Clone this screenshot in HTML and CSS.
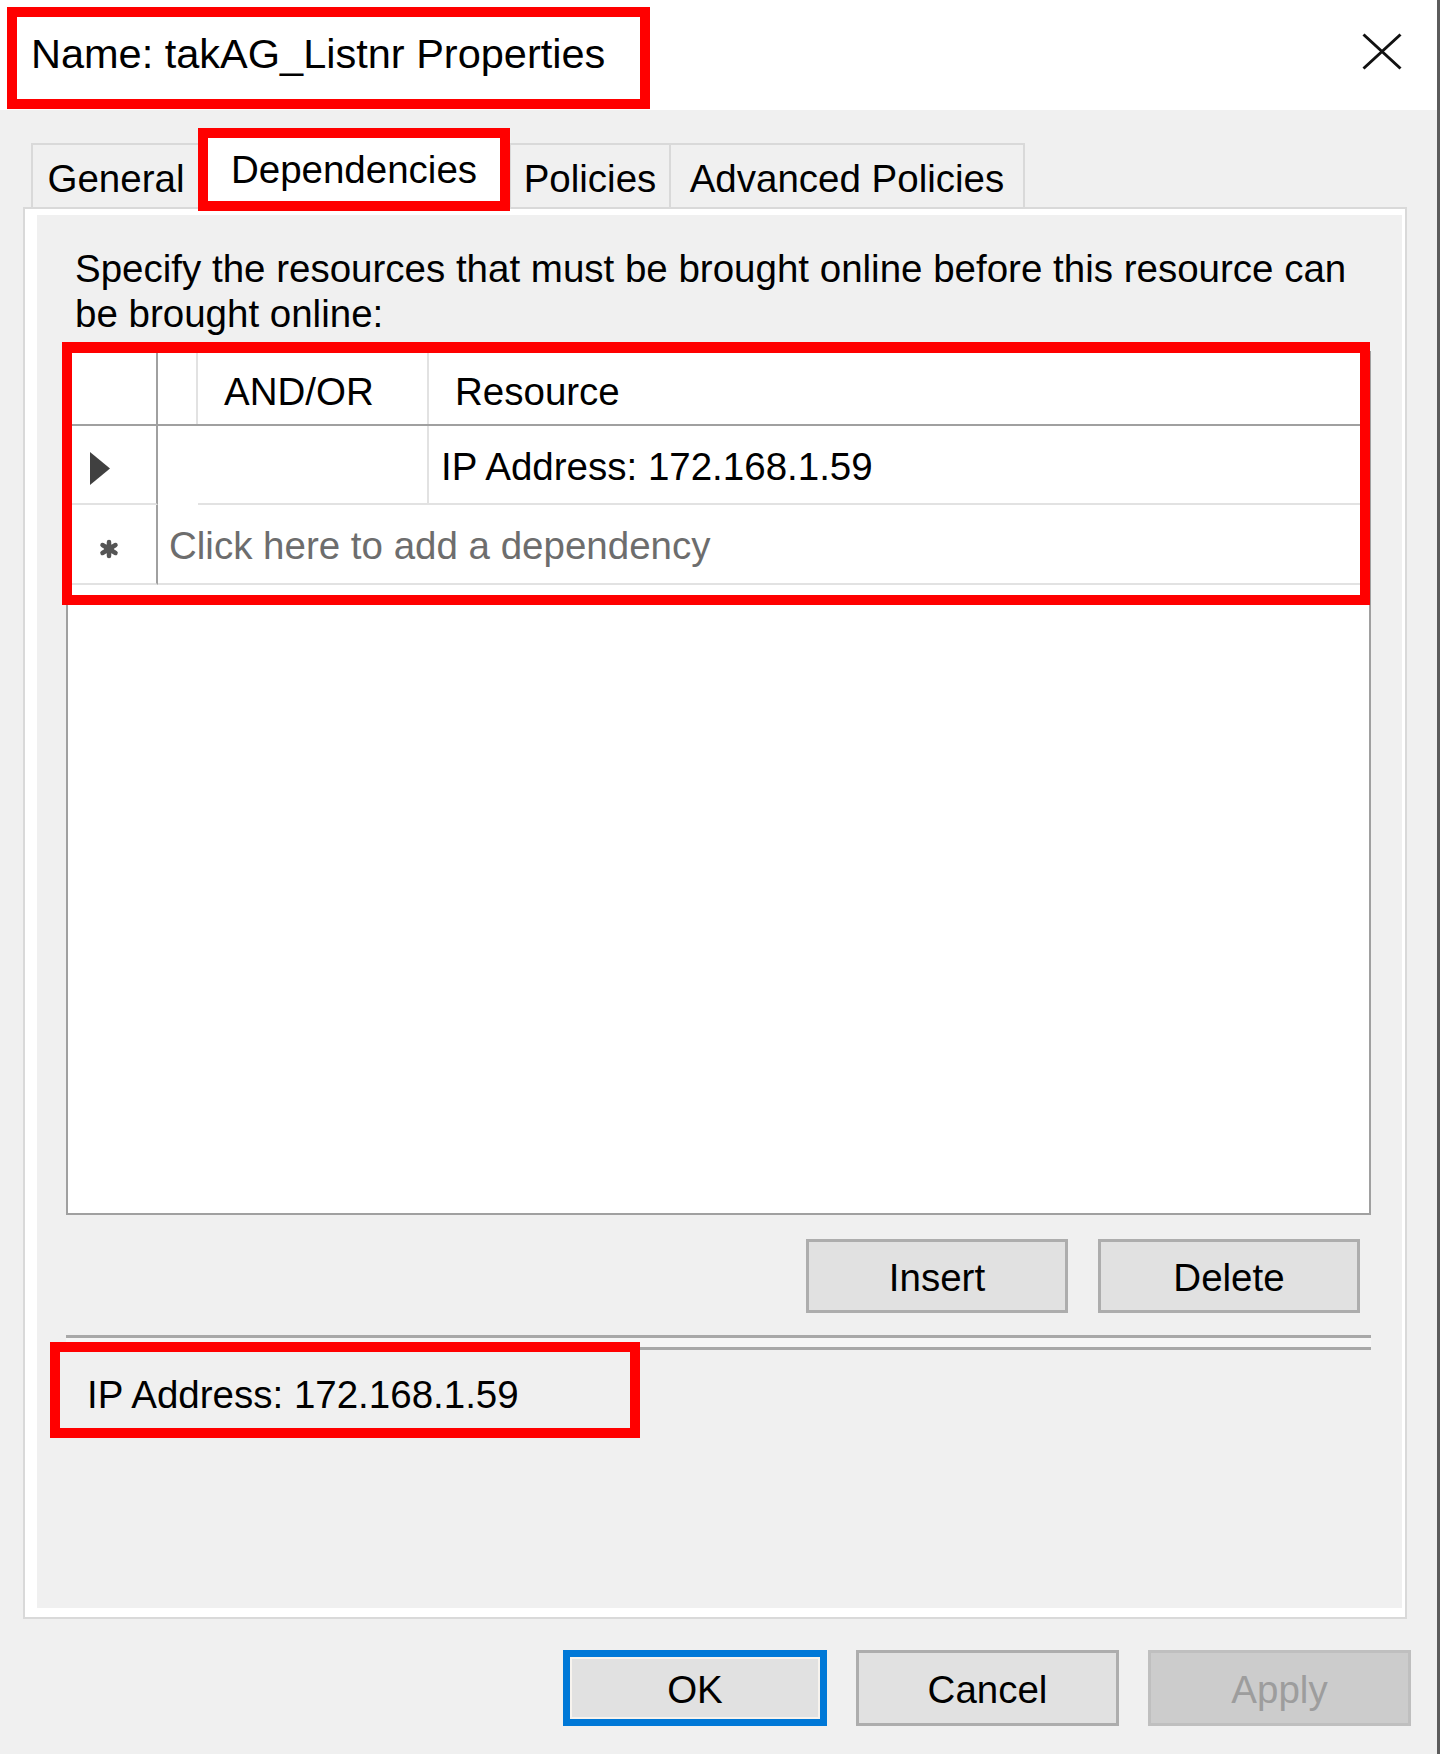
FILE: index.html
```html
<!DOCTYPE html>
<html lang="en">
<head>
<meta charset="utf-8">
<title>Name: takAG_Listnr Properties</title>
<link rel="stylesheet" href="styles.css">
</head>
<body>
<div class="window">
  <div class="titlebar">
    <span class="title">Name: takAG_Listnr Properties</span>
    <svg class="close" width="40" height="37" viewBox="0 0 40 37"><path d="M1.5 1.5 L38.5 35.5 M38.5 1.5 L1.5 35.5" stroke="#111" stroke-width="3" fill="none"/></svg>
  </div>

  <div class="tabs">
    <div class="tab t-general">General</div>
    <div class="tab selected">Dependencies</div>
    <div class="tab t-policies">Policies</div>
    <div class="tab t-adv">Advanced Policies</div>
  </div>

  <div class="panel">
    <div class="panel-inner">
      <p class="desc">Specify the resources that must be brought online before this resource can<br>be brought online:</p>

      <div class="grid">
        <div class="row head">
          <div class="rh"></div>
          <div class="c2"></div>
          <div class="c3 htext">AND/OR</div>
          <div class="c4 htext">Resource</div>
        </div>
        <div class="row r1">
          <div class="rh"><svg class="tri" width="20" height="33" viewBox="0 0 20 33"><polygon points="0,0 20,16.5 0,33" fill="#404040"/></svg></div>
          <div class="c2"></div>
          <div class="c3"></div>
          <div class="c4 cell">IP Address: 172.168.1.59</div>
        </div>
        <div class="row r2">
          <div class="rh"><svg class="star" width="24" height="20" viewBox="0 0 24 20"><g stroke="#555" stroke-width="4.5" stroke-linecap="round"><path d="M12 3 L12 17"/><path d="M5.5 6 L18.5 14"/><path d="M18.5 6 L5.5 14"/></g><circle cx="12" cy="10" r="5" fill="#555"/></svg></div>
          <div class="cnew">Click here to add a dependency</div>
        </div>
      </div>

      <div class="actions">
        <div class="btn">Insert</div>
        <div class="btn">Delete</div>
      </div>

      <div class="sep"></div>

      <div class="info">IP Address: 172.168.1.59</div>
    </div>
  </div>

  <div class="dialog-buttons">
    <div class="dbtn ok">OK</div>
    <div class="dbtn">Cancel</div>
    <div class="dbtn apply">Apply</div>
  </div>
</div>
</body>
</html>
```

FILE: styles.css
```css
*, *::before, *::after { box-sizing: border-box; }

body {
  margin: 0;
  background: #f0f0f0;
  font-family: "Liberation Sans", Arial, sans-serif;
  color: #000;
}

.window {
  width: 1440px;
  height: 1754px;
  border-right: 3px solid #5c5c5c;
  background: #f0f0f0;
  overflow: hidden;
}

/* Title bar */
.titlebar {
  height: 110px;
  background: #fff;
  display: flex;
  justify-content: space-between;
  align-items: flex-start;
  padding: 0 35px 0 31px;
}

.title {
  position: relative;
  margin-top: 30px;
  font-size: 41.5px;
  line-height: 48px;
  white-space: nowrap;
}

.title::after {
  content: "";
  position: absolute;
  left: -24px;
  top: -23px;
  width: 643px;
  height: 102px;
  border: 10px solid #f00;
}

.close {
  display: block;
  margin-top: 33px;
}

/* Tabs */
.tabs {
  display: flex;
  align-items: flex-end;
  height: 77px;
  margin-top: 20px;
  padding-left: 31px;
}

.tab {
  height: 64px;
  border-top: 2px solid #d9d9d9;
  border-left: 2px solid #d9d9d9;
  padding-top: 5px;
  font-size: 38.5px;
  line-height: 57px;
  text-align: center;
  white-space: nowrap;
}

.t-general { width: 168px; }
.t-policies { width: 160px; }
.t-adv { width: 356px; border-right: 2px solid #d9d9d9; }

.tab.selected {
  position: relative;
  z-index: 1;
  width: 310px;
  height: 80px;
  margin-bottom: -3px;
  border: none;
  background: #fff;
  padding-top: 10px;
  line-height: 60px;
}

.tab.selected::after {
  content: "";
  position: absolute;
  left: -1px;
  top: -2px;
  right: -1px;
  bottom: -1px;
  border: 10px solid #f00;
}

/* Panel */
.panel {
  margin-left: 23px;
  width: 1384px;
  height: 1412px;
  border: 2px solid #d9d9d9;
}

.panel-inner {
  height: 100%;
  border-style: solid;
  border-color: #fff;
  border-width: 6px 3px 9px 12px;
}

.desc {
  margin: 0;
  padding: 31px 0 0 38px;
  font-size: 38.5px;
  line-height: 45px;
  white-space: nowrap;
}

/* Grid */
.grid {
  position: relative;
  margin: 15px 0 0 29px;
  width: 1305px;
  height: 864px;
  border: 2px solid #a0a0a0;
  background: #fff;
  font-size: 38.5px;
}

.grid::after {
  content: "";
  position: absolute;
  left: -6px;
  top: -11px;
  width: 1308px;
  height: 263px;
  border: 10px solid #f00;
  border-top-width: 11px;
  z-index: 2;
}

.row { display: flex; }

.rh {
  flex: none;
  width: 90px;
  border-right: 2px solid #a0a0a0;
}

.c2 { flex: none; width: 40px; }
.c3 { flex: none; width: 231px; border-right: 2px solid #e2e2e2; }
.c4 { flex: 1; }

.head {
  height: 73px;
  border-bottom: 2px solid #a0a0a0;
}

.head .c2 { border-right: 2px solid #e2e2e2; }

.htext {
  padding: 3px 0 0 26px;
  line-height: 71px;
  white-space: nowrap;
}

.r1 { height: 79px; }

.r1 .rh,
.r1 .c3,
.r1 .c4 { border-bottom: 2px solid #e2e2e2; }

.r1 .rh { padding: 26px 0 0 22px; }

.cell {
  padding: 2px 0 0 12px;
  line-height: 77px;
  white-space: nowrap;
}

.r2 { height: 80px; }

.r2 .rh {
  border-bottom: 2px solid #e2e2e2;
  padding: 34px 0 0 29px;
}

.cnew {
  flex: 1;
  border-bottom: 2px solid #e2e2e2;
  padding: 2px 0 0 11px;
  line-height: 77px;
  color: #6d6d6d;
  white-space: nowrap;
}

.tri, .star { display: block; }

/* Insert / Delete */
.actions {
  display: flex;
  justify-content: flex-end;
  gap: 30px;
  margin-top: 24px;
  padding-right: 42px;
}

.btn {
  width: 262px;
  height: 74px;
  border: 3px solid #adadad;
  background: #e1e1e1;
  padding-top: 4px;
  font-size: 38.5px;
  line-height: 64px;
  text-align: center;
}

/* Etched separator */
.sep {
  margin: 22px 0 0 29px;
  width: 1305px;
  height: 15px;
  border-top: 3px solid #a8a8a8;
  border-bottom: 3px solid #a8a8a8;
  background: #f6f6f6;
}

/* Selected resource label */
.info {
  position: relative;
  width: max-content;
  margin: 22px 0 0 50px;
  font-size: 38.5px;
  line-height: 45px;
  white-space: nowrap;
}

.info::after {
  content: "";
  position: absolute;
  left: -37px;
  top: -30px;
  width: 590px;
  height: 96px;
  border: 10px solid #f00;
}

/* Dialog buttons */
.dialog-buttons {
  display: flex;
  justify-content: flex-end;
  gap: 29px;
  margin-top: 31px;
  padding-right: 26px;
}

.dbtn {
  width: 263px;
  height: 76px;
  border: 3px solid #adadad;
  background: #e1e1e1;
  padding-top: 4px;
  font-size: 38.5px;
  line-height: 66px;
  text-align: center;
}

.dbtn.ok {
  width: 264px;
  border: 7px solid #0078d7;
  box-shadow: inset 0 0 0 2px #f7f3ee;
  padding-top: 3px;
  line-height: 59px;
}

.dbtn.apply {
  background: #cccccc;
  border-color: #bfbfbf;
  color: #9d9d9d;
}
```
